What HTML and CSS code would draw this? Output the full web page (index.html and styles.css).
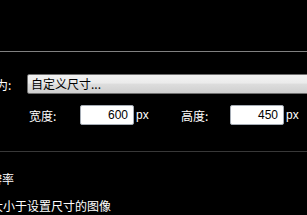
FILE: index.html
```html
<!DOCTYPE html>
<html lang="zh-CN">
<head>
    <meta charset="UTF-8">
    <title>调整大小</title>
    <link rel="stylesheet" href="styles.css">
</head>
<body>
<div class="panel">
    <div class="top"></div>
    <div class="rule"></div>

    <div class="row row-select">
        <span class="label-mode">调整大小为:</span>
        <div class="combo">自定义尺寸...</div>
    </div>

    <div class="row row-size">
        <span class="label-w">宽度:</span>
        <input class="num" type="text" value="600">
        <span class="unit unit-w">px</span>
        <span class="label-h">高度:</span>
        <input class="num" type="text" value="450">
        <span class="unit">px</span>
    </div>

    <div class="rule rule-dark"></div>

    <div class="opt opt-ratio">分辨率</div>
    <div class="opt opt-small">放大小于设置尺寸的图像</div>
</div>
</body>
</html>
```

FILE: styles.css
```css
body {
    margin: 0;
    background-color: #000;
    color: #fff;
    font-family: "Noto Sans CJK SC", "Liberation Sans", sans-serif;
    font-size: 12px;
    overflow: hidden;
}
.panel {
    width: 307px;
    height: 215px;
    overflow: hidden;
}
.top {
    height: 51px;
}
.rule {
    height: 1px;
    background-color: #808080;
}
.rule-dark {
    margin-top: 26px;
    background-color: #383838;
}
.row {
    display: flex;
    align-items: center;
    height: 20px;
    white-space: nowrap;
}
.row-select {
    margin-top: 22px;
}
.label-mode {
    width: 62px;
    margin-left: -52px;
    margin-right: 17px;
    text-align: right;
    flex-shrink: 0;
}
.combo {
    flex-shrink: 0;
    box-sizing: border-box;
    width: 300px;
    height: 20px;
    line-height: 18px;
    padding-left: 3px;
    color: #000;
    border: 1px solid #707070;
    border-radius: 2px;
    background: linear-gradient(#f2f2f2 0%, #ebebeb 45%, #dddddd 50%, #cfcfcf 100%);
}
.row-size {
    margin-top: 11px;
    padding-left: 29px;
}
.label-w {
    width: 51px;
    flex-shrink: 0;
}
.label-h {
    width: 49px;
    flex-shrink: 0;
}
.num {
    box-sizing: border-box;
    width: 54px;
    height: 20px;
    margin: 0;
    padding: 0 5px 0 0;
    border: 1px solid #a5acb5;
    border-radius: 2px;
    background: #fff;
    color: #000;
    text-align: right;
    font-family: "Liberation Sans", sans-serif;
    font-size: 12px;
    flex-shrink: 0;
}
.unit {
    margin-left: 2px;
    font-family: "Liberation Sans", sans-serif;
    font-size: 12px;
}
.unit-w {
    width: 45px;
    flex-shrink: 0;
}
.opt {
    line-height: 14px;
    white-space: nowrap;
}
.opt-ratio {
    margin-top: 20px;
    margin-left: -22px;
}
.opt-small {
    margin-top: 13px;
    margin-left: -21px;
}
```
